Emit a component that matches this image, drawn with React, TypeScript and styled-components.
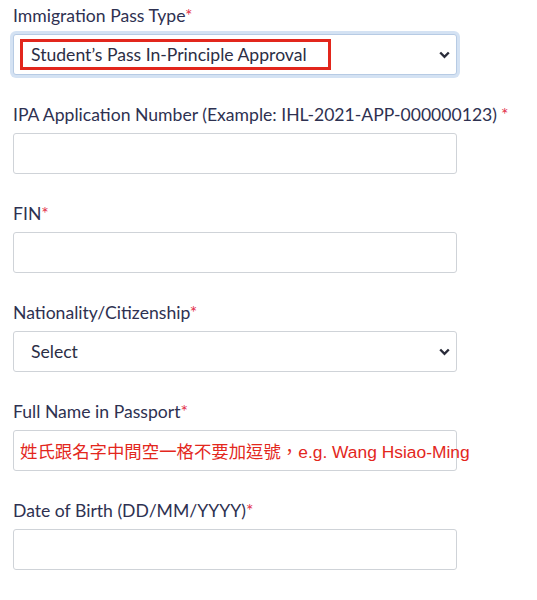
import React from "react";
import styled, { createGlobalStyle } from "styled-components";

const Global = createGlobalStyle`
  html, body { margin: 0; padding: 0; background: #ffffff; }
  body { font-family: Lato, "Noto Sans", sans-serif; }
`;

const Form = styled.div`
  width: 444px;
  padding: 4px 0 0 13px;
  display: flex;
  flex-direction: column;
  gap: 28px;
`;

const Field = styled.div`
  display: flex;
  flex-direction: column;
  gap: 6px;
`;

const Label = styled.label`
  font-family: Lato, sans-serif;
  font-size: 17.6px;
  line-height: 24px;
  color: #2e3151;
  white-space: nowrap;
`;

const Star = styled.span<{ $spaced?: boolean }>`
  color: #e3344e;
  margin-left: ${(p) => (p.$spaced ? "4px" : "0")};
`;

const Box = styled.div<{ $focused?: boolean }>`
  position: relative;
  box-sizing: border-box;
  height: 41px;
  border: 1px solid ${(p) => (p.$focused ? "#b7cbe4" : "#cfd3d8")};
  border-radius: 3px;
  background: #fff;
  display: flex;
  align-items: center;
  padding: 0 6px 0 17px;
  box-shadow: ${(p) => (p.$focused ? "0 0 0 3px #d4e2f3" : "none")};
`;

const SelectText = styled.span`
  flex: 1;
  font-family: Lato, sans-serif;
  font-size: 17.6px;
  color: #2b2e45;
  white-space: nowrap;
`;

const Highlight = styled.span`
  position: absolute;
  left: 6px;
  top: 4px;
  width: 311px;
  height: 31px;
  box-sizing: border-box;
  border: 3px solid #e2261c;
  pointer-events: none;
`;

const Hint = styled.span`
  font-family: "Liberation Sans", Arial, "Noto Sans CJK TC", sans-serif;
  font-size: 17.4px;
  color: #e3271d;
  white-space: nowrap;
  margin-left: -11px;
`;

const Chevron = () => (
  <svg width="11" height="8" viewBox="0 0 11 8">
    <path d="M1.2 1.5 L5.5 5.8 L9.8 1.5" fill="none" stroke="#2a2c3a" strokeWidth="2.4" />
  </svg>
);

export default function App() {
  return (
    <>
      <Global />
      <Form>
        <Field>
          <Label>
            Immigration Pass Type<Star>*</Star>
          </Label>
          <Box $focused>
            <Highlight />
            <SelectText>Student’s Pass In-Principle Approval</SelectText>
            <Chevron />
          </Box>
        </Field>
        <Field>
          <Label>
            IPA Application Number (Example: IHL-2021-APP-000000123)<Star $spaced>*</Star>
          </Label>
          <Box />
        </Field>
        <Field>
          <Label>
            FIN<Star>*</Star>
          </Label>
          <Box />
        </Field>
        <Field>
          <Label>
            Nationality/Citizenship<Star>*</Star>
          </Label>
          <Box>
            <SelectText>Select</SelectText>
            <Chevron />
          </Box>
        </Field>
        <Field>
          <Label>
            Full Name in Passport<Star>*</Star>
          </Label>
          <Box>
            <Hint>姓氏跟名字中間空一格不要加逗號，e.g. Wang Hsiao-Ming</Hint>
          </Box>
        </Field>
        <Field>
          <Label>
            Date of Birth (DD/MM/YYYY)<Star>*</Star>
          </Label>
          <Box />
        </Field>
      </Form>
    </>
  );
}
